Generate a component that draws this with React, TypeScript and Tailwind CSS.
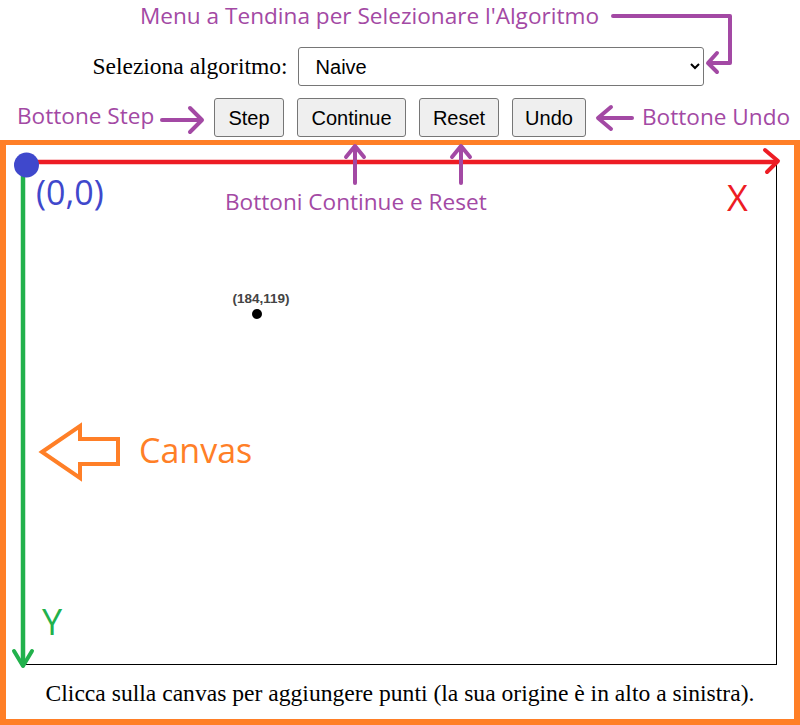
import React from 'react';

const PURPLE = '#a349a4';

// Annotation labels drawn on top of the screenshot
const notes = [
  { text: "Menu a Tendina per Selezionare l'Algoritmo", cls: 'left-[140px] top-[5px] text-[22.6px] text-[#a349a4]' },
  { text: 'Bottone Step', cls: 'left-[17px] top-[105px] text-[22.6px] text-[#a349a4]' },
  { text: 'Bottone Undo', cls: 'left-[642px] top-[106px] text-[22.6px] text-[#a349a4]' },
  { text: 'Bottoni Continue e Reset', cls: 'left-[225px] top-[191px] text-[22.6px] text-[#a349a4]' },
  { text: '(0,0)', cls: 'left-[36px] top-[175px] text-[34px] text-[#3f48cc]' },
  { text: 'X', cls: 'left-[727px] top-[180px] text-[36px] text-[#ed1c24]' },
  { text: 'Y', cls: 'left-[42px] top-[604px] text-[36px] text-[#22b14c]' },
  { text: 'Canvas', cls: 'left-[139px] top-[433px] text-[34px] text-[#ff7f27]' },
];

export default function App() {
  return (
    <div className="relative w-[800px] h-[725px] bg-white overflow-hidden pt-[47px]">
      {/* Algorithm select */}
      <div className="flex h-[39px] items-center justify-center gap-[10px] pr-[4px]">
        <label className="text-[23.5px] text-black font-['Liberation_Serif',serif]">Seleziona algoritmo:</label>
        <select
          defaultValue="naive"
          className="w-[406px] h-[39px] border border-[#767676] rounded-[3px] bg-white pl-[13px] text-[20px] text-black font-['Liberation_Sans',Arial,sans-serif]"
        >
          <option value="naive">Naive</option>
          <option value="graham">Graham</option>
          <option value="jarvis">Jarvis</option>
        </select>
      </div>

      {/* Controls */}
      <div className="mt-[12px] flex h-[39px] justify-center gap-[13px] font-['Liberation_Sans',Arial,sans-serif]">
        {[
          { label: 'Step', w: 'w-[70px]' },
          { label: 'Continue', w: 'w-[109px]' },
          { label: 'Reset', w: 'w-[80px]' },
          { label: 'Undo', w: 'w-[74px]' },
        ].map(b => (
          <button
            key={b.label}
            className={`${b.w} h-[39px] border border-[#767676] rounded-[3px] bg-[#efefef] text-[20px] text-black`}
          >
            {b.label}
          </button>
        ))}
      </div>

      {/* Canvas area (outlined in orange) */}
      <div className="mt-[3px] h-[585px] border-[6px] border-t-[5px] border-[#ff7f27]">
        <div className="relative ml-[16px] mt-[15px] w-[755px] h-[505px] border border-black">
          <div className="absolute left-[204px] top-[128px] w-[68px] text-center text-[13.5px] font-bold text-[#444] font-['Liberation_Sans',Arial,sans-serif]">
            (184,119)
          </div>
          <div className="absolute left-[229px] top-[148px] w-[10px] h-[10px] rounded-full bg-black" />
        </div>
        <p className="mt-[11px] text-center text-[23.6px] text-black font-['Liberation_Serif',serif]">
          Clicca sulla canvas per aggiungere punti (la sua origine è in alto a sinistra).
        </p>
      </div>

      {/* Annotation drawing */}
      <svg className="absolute inset-0 pointer-events-none" width="800" height="725" viewBox="0 0 800 725" fill="none">
        {/* X axis */}
        <line x1="35" y1="162" x2="776" y2="162" stroke="#ed1c24" strokeWidth="4.5" />
        <polyline points="765,150 778,161 767,172" stroke="#ed1c24" strokeWidth="4" strokeLinecap="round" strokeLinejoin="round" />
        {/* Y axis */}
        <line x1="23" y1="170" x2="23" y2="664" stroke="#22b14c" strokeWidth="4.5" />
        <polyline points="14,651 23,666 32,651" stroke="#22b14c" strokeWidth="4" strokeLinecap="round" strokeLinejoin="round" />
        <circle cx="26.5" cy="165" r="12.5" fill="#3f48cc" />

        {/* menu arrow */}
        <polyline points="613,16 730,16 730,63 710,63" stroke={PURPLE} strokeWidth="4" strokeLinecap="round" strokeLinejoin="round" />
        <polyline points="717,53 708,63 717,72" stroke={PURPLE} strokeWidth="4" strokeLinecap="round" strokeLinejoin="round" />
        {/* step arrow */}
        <line x1="162" y1="120" x2="200" y2="120" stroke={PURPLE} strokeWidth="4" strokeLinecap="round" />
        <polyline points="190,108 202,120 190,132" stroke={PURPLE} strokeWidth="4" strokeLinecap="round" strokeLinejoin="round" />
        {/* undo arrow */}
        <line x1="632" y1="118" x2="600" y2="118" stroke={PURPLE} strokeWidth="4" strokeLinecap="round" />
        <polyline points="611,107 598,118 611,129" stroke={PURPLE} strokeWidth="4" strokeLinecap="round" strokeLinejoin="round" />
        {/* continue / reset arrows */}
        <line x1="355" y1="183" x2="355" y2="149" stroke={PURPLE} strokeWidth="4" strokeLinecap="round" />
        <polyline points="346,157 355,146 364,157" stroke={PURPLE} strokeWidth="4" strokeLinecap="round" strokeLinejoin="round" />
        <line x1="461" y1="183" x2="461" y2="149" stroke={PURPLE} strokeWidth="4" strokeLinecap="round" />
        <polyline points="452,157 461,146 470,157" stroke={PURPLE} strokeWidth="4" strokeLinecap="round" strokeLinejoin="round" />

        {/* canvas hollow arrow */}
        <polygon points="42,452 80,426 80,439 118,439 118,464 80,464 80,478" stroke="#ff7f27" strokeWidth="4" strokeLinejoin="miter" />
      </svg>

      {notes.map(n => (
        <div key={n.text} className={`absolute leading-none whitespace-nowrap font-['Open_Sans',sans-serif] ${n.cls}`}>
          {n.text}
        </div>
      ))}
    </div>
  );
}
